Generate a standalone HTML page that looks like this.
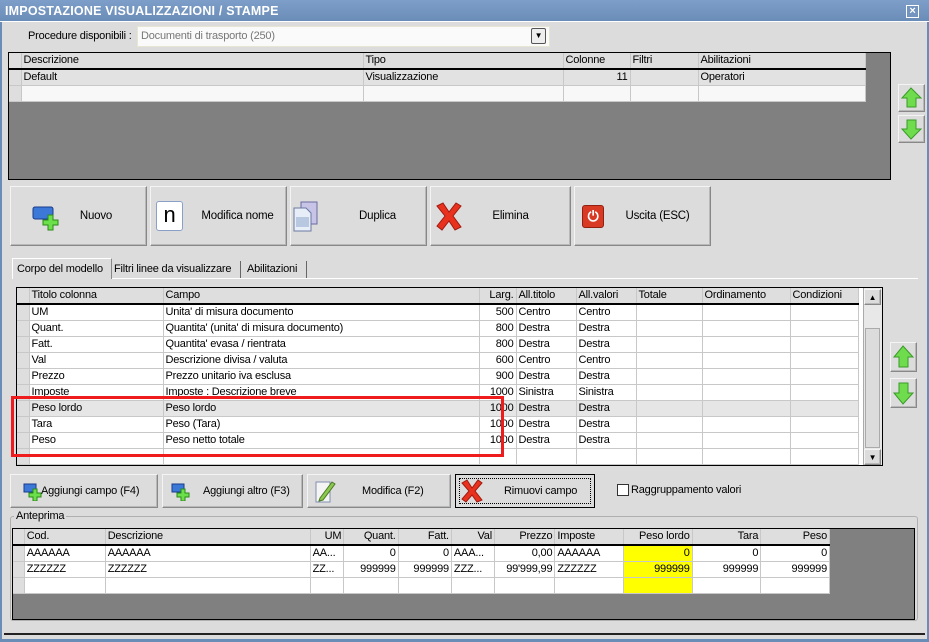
<!DOCTYPE html><html><head><meta charset="utf-8"><style>
*{box-sizing:border-box;margin:0;padding:0}
body{width:929px;height:642px;overflow:hidden;background:#dcdcdc;font:11px "Liberation Sans",sans-serif;letter-spacing:-0.2px;color:#000;position:relative;white-space:nowrap}
.a{position:absolute}
.title{left:0;top:0;width:929px;height:22px;background:linear-gradient(#7d9ec8,#6a8db8);color:#fff;font-weight:bold;font-size:12.5px;letter-spacing:0.2px;line-height:22px;padding-left:5px;border-bottom:1px solid #fff}
.frame{left:0;top:22px;width:929px;height:620px;border-left:2px solid #6a8db8;border-right:2px solid #6a8db8;border-bottom:3px solid #6a8db8}
table{border-collapse:collapse;table-layout:fixed;position:absolute;background:#fff}
td{border-right:1px solid #c8c8c8;border-bottom:1px solid #c8c8c8;height:16px;padding:0 2px;white-space:nowrap;overflow:hidden;line-height:15px}
tr.h td{background:#dedede;border-bottom:2px solid #000;height:16px}
td.i{background:#dedede;padding:0}
.r{text-align:right}
.btn{background:#dcdcdc;border:1px solid #f4f4f4;border-right-color:#888;border-bottom-color:#888;box-shadow:inset -1px -1px 0 #b8b8b8}
.bt{font-size:11.5px;line-height:58px;text-align:center}
.arr{width:27px;height:28px}
</style></head><body>
<div class="a frame"></div>
<div class="a title">IMPOSTAZIONE VISUALIZZAZIONI / STAMPE</div>
<div class="a" style="left:906px;top:5px;width:13px;height:13px;background:#d9e3ef;color:#fff;border:1px solid #fff;"><div style="background:#7294be;width:11px;height:11px;color:#fff;font:bold 11px/11px 'Liberation Sans';text-align:center">×</div></div>

<div class="a" style="left:28px;top:30px">Procedure disponibili :</div>
<div class="a" style="left:137px;top:26px;width:413px;height:21px;background:#fafafa;border:1px solid #e6e6d2;color:#777;padding:3px 3px;">Documenti di trasporto (250)</div>
<div class="a" style="left:531px;top:28px;width:15px;height:16px;border:1px solid #555;border-radius:2px;background:#eee;text-align:center;font-size:8px;line-height:14px">▼</div>

<div class="a" style="left:8px;top:52px;width:883px;height:128px;background:#808080;border:1px solid #000"></div>
<table style="left:9px;top:53px;width:856px;border-right:1px solid #000;border-bottom:1px solid #000">
<colgroup><col style="width:12px"><col style="width:342px"><col style="width:200px"><col style="width:67px"><col style="width:68px"><col style="width:167px"></colgroup>
<tr class="h"><td class="i"></td><td>Descrizione</td><td>Tipo</td><td>Colonne</td><td>Filtri</td><td>Abilitazioni</td></tr>
<tr style="background:#e2e2e2"><td class="i"></td><td>Default</td><td>Visualizzazione</td><td class="r">11</td><td></td><td>Operatori</td></tr>
<tr style="background:#f8f8f8"><td class="i"></td><td></td><td></td><td></td><td></td><td></td></tr>
</table>
<div class="a btn arr" style="left:898px;top:84px"><svg width="25" height="26"><path d="M12 3L22 13H17V22H8V13H3Z" fill="#6fdc4e" stroke="#3a9a28"/></svg></div>
<div class="a btn arr" style="left:898px;top:115px"><svg width="25" height="26"><path d="M12 23L22 13H17V4H8V13H3Z" fill="#6fdc4e" stroke="#3a9a28"/></svg></div>

<div class="a btn bt" style="left:10px;top:186px;width:137px;height:60px"><svg class="a" style="left:20px;top:18px" width="30" height="26"><rect x="2" y="2" width="20" height="12" rx="2" fill="#3c78d8" stroke="#1a3c8c"/><path d="M17 10h5v5h5v5h-5v5h-5v-5h-5v-5h5z" fill="#6ce04a" stroke="#2a8a18"/></svg><span style="margin-left:35px">Nuovo</span></div>
<div class="a btn bt" style="left:150px;top:186px;width:137px;height:60px"><div class="a" style="left:5px;top:14px;width:27px;height:30px;border:1px solid #8aa0c8;border-radius:3px;background:#fff;font:22px/26px 'Liberation Sans';text-align:center">n</div><span style="margin-left:38px">Modifica nome</span></div>
<div class="a btn bt" style="left:290px;top:186px;width:137px;height:60px"><svg class="a" style="left:0px;top:13px" width="32" height="34"><rect x="10" y="2" width="16" height="22" fill="#c8c4e8" stroke="#6a6aa0"/><path d="M3 8h12l5 5v18H3z" fill="#e8eef8" stroke="#6a7aa0"/><rect x="5" y="17" width="13" height="10" fill="#b8c8e0"/></svg><span style="margin-left:38px">Duplica</span></div>
<div class="a btn bt" style="left:430px;top:186px;width:141px;height:60px"><svg class="a" style="left:3px;top:14px" width="30" height="30"><path d="M3 5L9 2L15 11L22 2L27 5L19 15L27 26L21 29L15 20L8 29L3 25L11 15Z" fill="#e8321e" stroke="#a01a10"/></svg><span style="margin-left:20px">Elimina</span></div>
<div class="a btn bt" style="left:574px;top:186px;width:137px;height:60px"><div class="a" style="left:7px;top:18px;width:22px;height:23px;background:#d83a24;border:1px solid #902010;border-radius:3px;color:#fff;font:bold 14px/21px 'Liberation Sans';text-align:center">⏻</div><span style="margin-left:30px">Uscita (ESC)</span></div>

<div class="a" style="left:12px;top:278px;width:906px;height:1px;background:#fff"></div>
<div class="a" style="left:12px;top:258px;width:100px;height:21px;background:#dcdcdc;border:1px solid #fff;border-bottom:none;border-right:1px solid #888;padding:4px 4px">Corpo del modello</div>
<div class="a" style="left:112px;top:261px;width:129px;height:17px;border-right:1px solid #666;padding:2px 2px">Filtri linee da visualizzare</div>
<div class="a" style="left:241px;top:261px;width:66px;height:17px;border-right:1px solid #666;padding:2px 6px">Abilitazioni</div>

<div class="a" style="left:16px;top:287px;width:867px;height:179px;background:#fff;border:1px solid #000"></div>
<table style="left:17px;top:288px;width:841px">
<colgroup><col style="width:12px"><col style="width:134px"><col style="width:316px"><col style="width:37px"><col style="width:60px"><col style="width:60px"><col style="width:66px"><col style="width:88px"><col style="width:68px"></colgroup>
<tr class="h"><td class="i"></td><td>Titolo colonna</td><td>Campo</td><td class="r">Larg.</td><td>All.titolo</td><td>All.valori</td><td>Totale</td><td>Ordinamento</td><td>Condizioni</td></tr>
<tr><td class="i"></td><td>UM</td><td>Unita' di misura documento</td><td class="r">500</td><td>Centro</td><td>Centro</td><td></td><td></td><td></td></tr>
<tr><td class="i"></td><td>Quant.</td><td>Quantita' (unita' di misura documento)</td><td class="r">800</td><td>Destra</td><td>Destra</td><td></td><td></td><td></td></tr>
<tr><td class="i"></td><td>Fatt.</td><td>Quantita' evasa / rientrata</td><td class="r">800</td><td>Destra</td><td>Destra</td><td></td><td></td><td></td></tr>
<tr><td class="i"></td><td>Val</td><td>Descrizione divisa / valuta</td><td class="r">600</td><td>Centro</td><td>Centro</td><td></td><td></td><td></td></tr>
<tr><td class="i"></td><td>Prezzo</td><td>Prezzo unitario iva esclusa</td><td class="r">900</td><td>Destra</td><td>Destra</td><td></td><td></td><td></td></tr>
<tr><td class="i"></td><td>Imposte</td><td>Imposte : Descrizione breve</td><td class="r">1000</td><td>Sinistra</td><td>Sinistra</td><td></td><td></td><td></td></tr>
<tr style="background:#e6e6e6"><td class="i"></td><td>Peso lordo</td><td>Peso lordo</td><td class="r">1000</td><td>Destra</td><td>Destra</td><td></td><td></td><td></td></tr>
<tr><td class="i"></td><td>Tara</td><td>Peso (Tara)</td><td class="r">1000</td><td>Destra</td><td>Destra</td><td></td><td></td><td></td></tr>
<tr><td class="i"></td><td>Peso</td><td>Peso netto totale</td><td class="r">1000</td><td>Destra</td><td>Destra</td><td></td><td></td><td></td></tr>
<tr><td class="i"></td><td></td><td></td><td></td><td></td><td></td><td></td><td></td><td></td></tr>
</table>
<div class="a" style="left:863px;top:288px;width:19px;height:177px;background:#e8e8e8;border-left:1px solid #aaa"></div>
<div class="a btn" style="left:864px;top:289px;width:17px;height:16px;font-size:8px;text-align:center;line-height:15px">▲</div>
<div class="a" style="left:865px;top:328px;width:15px;height:120px;background:#dcdcdc;border:1px solid #aaa"></div>
<div class="a btn" style="left:864px;top:449px;width:17px;height:16px;font-size:8px;text-align:center;line-height:15px">▼</div>
<div class="a" style="left:11px;top:396px;width:493px;height:61px;border:3px solid #ee1c1c"></div>
<div class="a btn arr" style="left:890px;top:342px;height:30px"><svg width="25" height="28"><path d="M12 3L22 14H17V24H8V14H3Z" fill="#6fdc4e" stroke="#3a9a28"/></svg></div>
<div class="a btn arr" style="left:890px;top:378px;height:30px"><svg width="25" height="28"><path d="M12 25L22 14H17V4H8V14H3Z" fill="#6fdc4e" stroke="#3a9a28"/></svg></div>

<div class="a btn" style="left:10px;top:474px;width:148px;height:34px;line-height:32px;padding-left:30px">Aggiungi campo (F4)<svg class="a" style="left:12px;top:8px" width="20" height="18"><rect x="1" y="1" width="12" height="8" fill="#3c78d8" stroke="#1a3c8c"/><path d="M10 6h4v4h4v4h-4v4h-4v-4h-4v-4h4z" fill="#6ce04a" stroke="#2a8a18"/></svg></div>
<div class="a btn" style="left:162px;top:474px;width:141px;height:34px;line-height:32px;padding-left:40px">Aggiungi altro (F3)<svg class="a" style="left:8px;top:8px" width="20" height="18"><rect x="1" y="1" width="12" height="8" fill="#3c78d8" stroke="#1a3c8c"/><path d="M10 6h4v4h4v4h-4v4h-4v-4h-4v-4h4z" fill="#6ce04a" stroke="#2a8a18"/></svg></div>
<div class="a btn" style="left:307px;top:474px;width:144px;height:34px;line-height:32px;padding-left:54px">Modifica (F2)<svg class="a" style="left:6px;top:3px" width="22" height="26"><path d="M2 4h14v20H2z" fill="#f4f4f4" stroke="#8090b0"/><path d="M6 20l12-16 3 2-12 16-4 1z" fill="#8cc850" stroke="#4a7a20"/></svg></div>
<div class="a" style="left:455px;top:474px;width:140px;height:34px;border:1px solid #000;background:#dcdcdc;line-height:32px;padding-left:48px"><div class="a" style="left:3px;top:3px;width:132px;height:26px;border:1px dotted #000"></div>Rimuovi campo<svg class="a" style="left:4px;top:4px" width="24" height="24"><path d="M2 4L7 1L12 9L18 1L22 4L15 12L22 21L17 23L12 16L6 23L2 20L9 12Z" fill="#e8321e" stroke="#a01a10"/></svg></div>
<div class="a" style="left:617px;top:484px;width:12px;height:12px;border:1px solid #333;background:#fff"></div>
<div class="a" style="left:631px;top:484px">Raggruppamento valori</div>

<div class="a" style="left:10px;top:516px;width:908px;height:105px;border:1px solid #b0b0b0;border-radius:3px"></div>
<div class="a" style="left:14px;top:510px;background:#dcdcdc;padding:0 2px">Anteprima</div>
<div class="a" style="left:12px;top:528px;width:903px;height:92px;background:#808080;border:1px solid #000"></div>
<table style="left:13px;top:529px;width:817px;border-right:1px solid #000;border-bottom:1px solid #000">
<colgroup><col style="width:11px"><col style="width:79px"><col style="width:200px"><col style="width:33px"><col style="width:53px"><col style="width:52px"><col style="width:42px"><col style="width:59px"><col style="width:67px"><col style="width:67px"><col style="width:67px"><col style="width:67px"></colgroup>
<tr class="h"><td class="i"></td><td>Cod.</td><td>Descrizione</td><td class="r">UM</td><td class="r">Quant.</td><td class="r">Fatt.</td><td class="r">Val</td><td class="r">Prezzo</td><td>Imposte</td><td class="r">Peso lordo</td><td class="r">Tara</td><td class="r">Peso</td></tr>
<tr><td class="i"></td><td>AAAAAA</td><td>AAAAAA</td><td>AA...</td><td class="r">0</td><td class="r">0</td><td>AAA...</td><td class="r">0,00</td><td>AAAAAA</td><td class="r" style="background:#ffff00">0</td><td class="r">0</td><td class="r">0</td></tr>
<tr><td class="i"></td><td>ZZZZZZ</td><td>ZZZZZZ</td><td>ZZ...</td><td class="r">999999</td><td class="r">999999</td><td>ZZZ...</td><td class="r">99'999,99</td><td>ZZZZZZ</td><td class="r" style="background:#ffff00">999999</td><td class="r">999999</td><td class="r">999999</td></tr>
<tr><td class="i"></td><td></td><td></td><td></td><td></td><td></td><td></td><td></td><td></td><td style="background:#ffff00"></td><td></td><td></td></tr>
</table>
<div class="a" style="left:4px;top:633px;width:921px;height:2px;background:#222"></div>
</body></html>
